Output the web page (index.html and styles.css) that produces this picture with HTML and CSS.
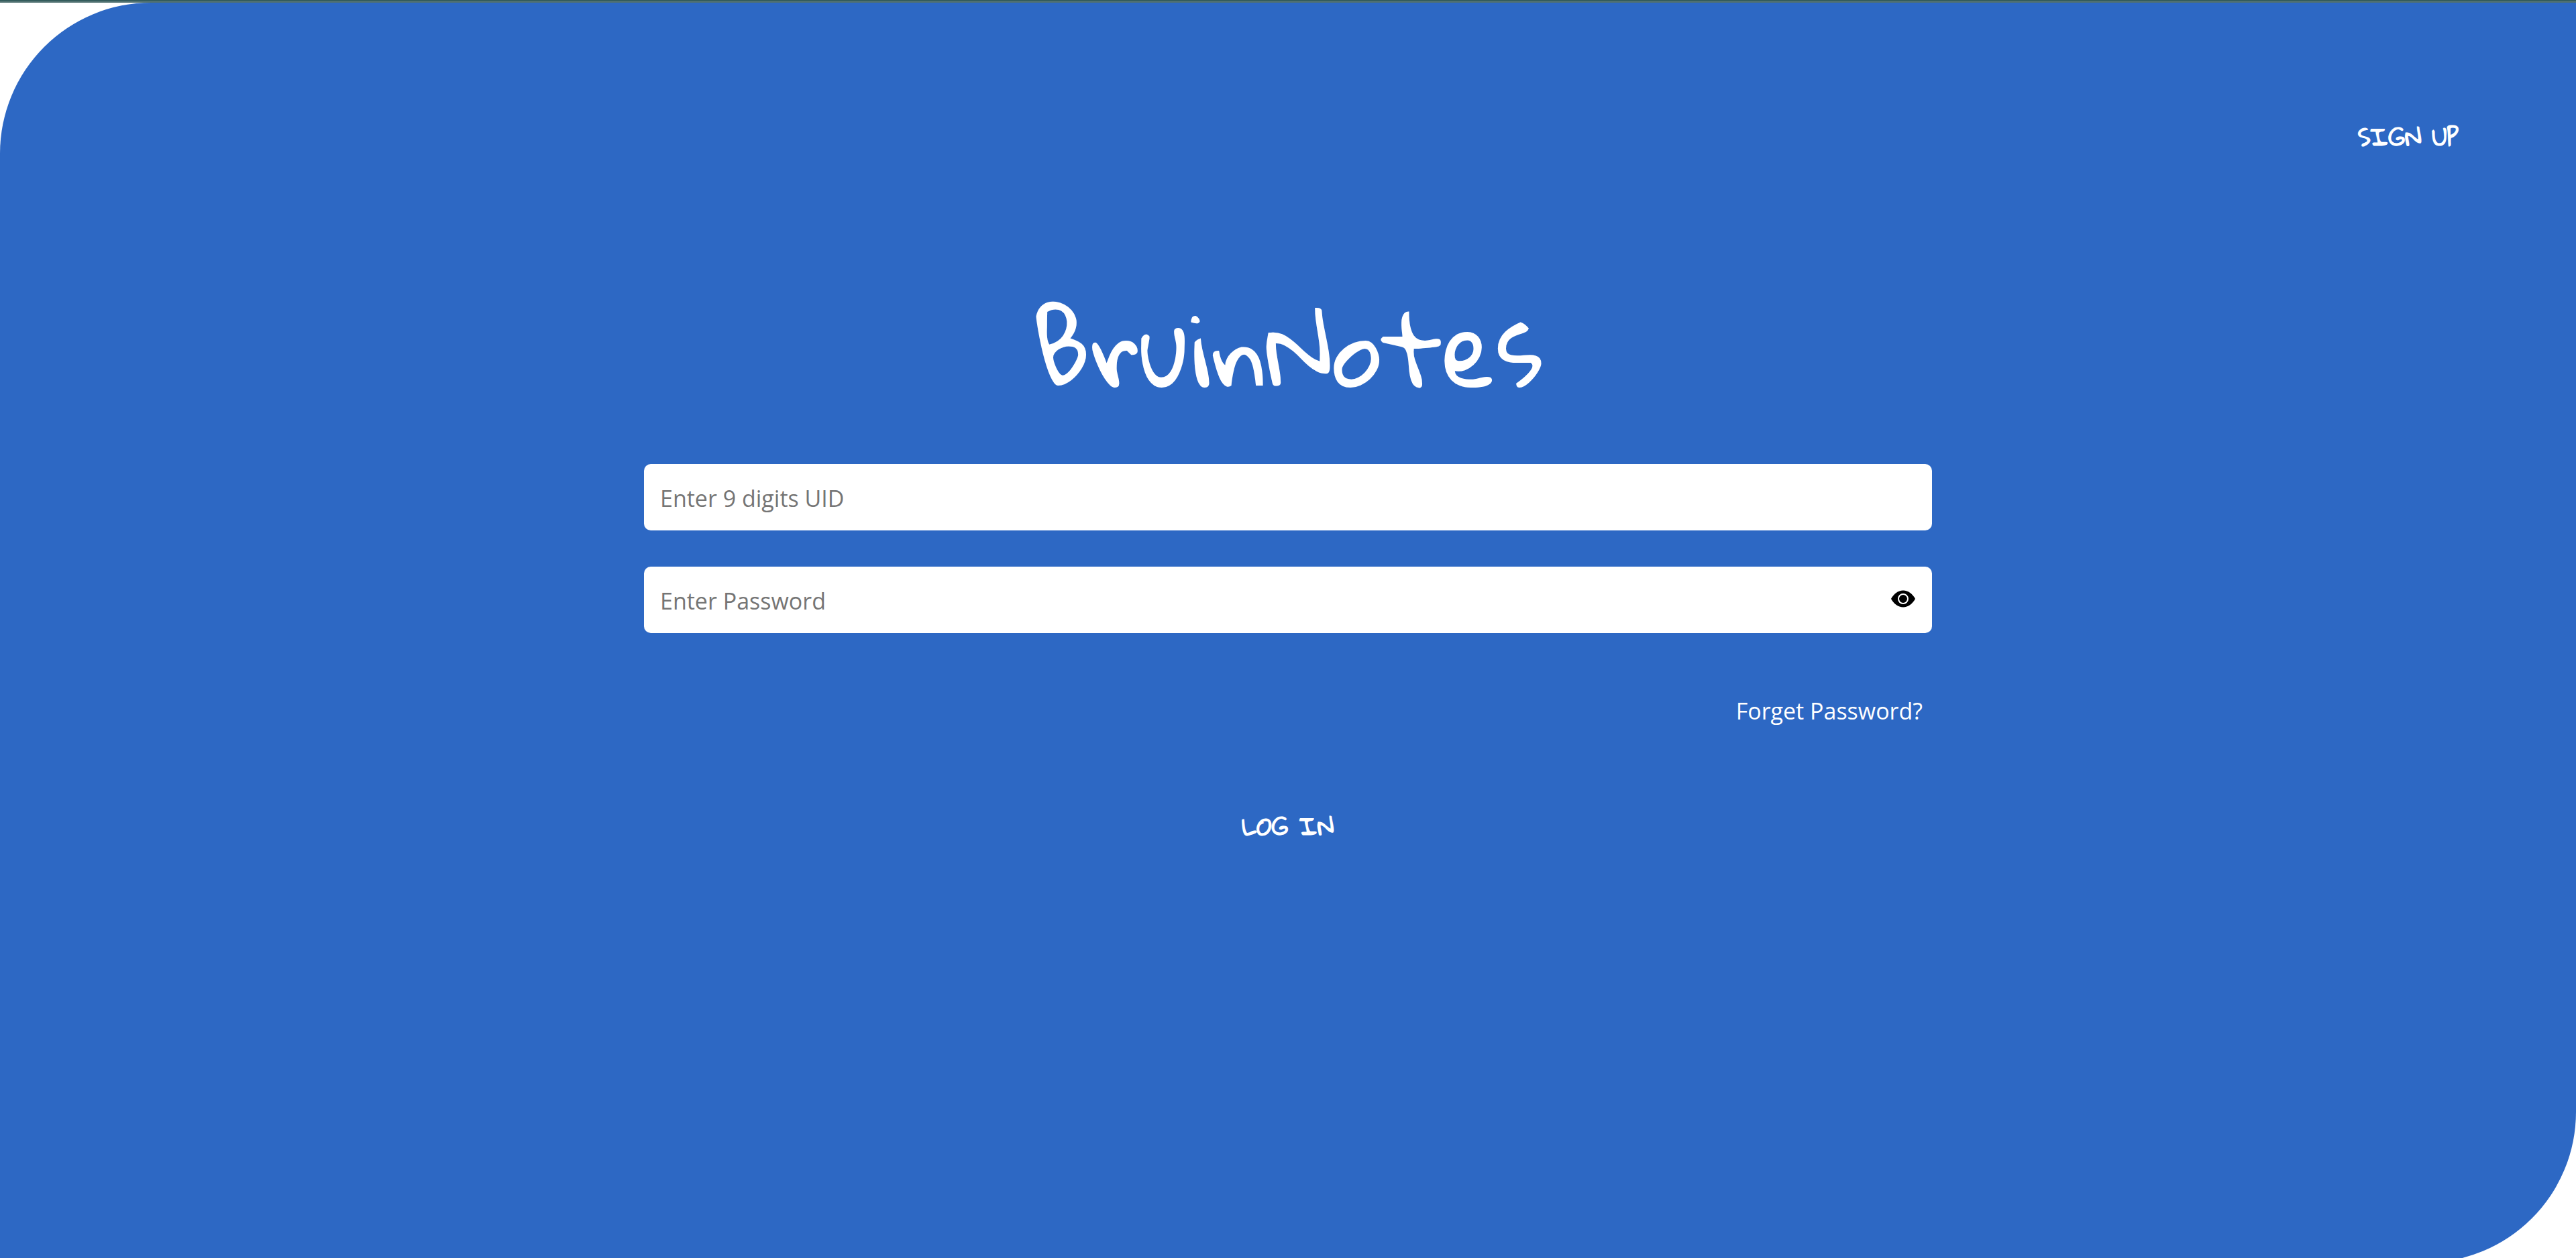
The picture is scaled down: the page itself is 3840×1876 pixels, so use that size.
FILE: index.html
```html
<!DOCTYPE html>
<html lang="en">
<head>
  <meta charset="utf-8">
  <meta name="viewport" content="width=device-width, initial-scale=1">
  <title>BruinNotes</title>
  <link rel="stylesheet" href="styles.css">
</head>
<body>
  <div class="page">
    <header class="header">
      <button class="action" type="button">SIGN UP</button>
    </header>
    <main class="login">
      <h1 class="title">BruinNotes</h1>
      <form class="form">
        <input class="field" type="text" name="uid" placeholder="Enter 9 digits UID" aria-label="UID">
        <div class="password">
          <input class="field" type="password" name="password" placeholder="Enter Password" aria-label="Password">
          <button class="reveal" type="button" aria-label="Show password">
            <svg class="eye" viewBox="0 0 36 26" aria-hidden="true">
              <path d="M0 13C4 5.500 10.500.5 18 .5S32 5.500 36 13c-4 7.500-10.500 12.500-18 12.500S4 20.500 0 13z" fill="#000"/>
              <circle cx="18" cy="13" r="7" fill="#000" stroke="#fff" stroke-width="2"/>
            </svg>
          </button>
        </div>
        <a class="forgot" href="#">Forget Password?</a>
        <button class="action submit" type="submit">LOG IN</button>
      </form>
    </main>
  </div>
</body>
</html>
```
FILE: styles.css
```css
* {
  box-sizing: border-box;
}

body {
  margin: 0;
  height: 100vh;
  overflow: hidden;
  background: #fff;
  font-family: "Segoe UI", "Open Sans", sans-serif;
}

/* thin two-tone line along the top edge */
body::before {
  content: "";
  display: block;
  height: 3px;
  border-top: 1px solid #2b5656;
  background: #4f7070;
}

.page {
  min-height: calc(100vh + 3px);
  padding-top: 159px;
  border-radius: 225px 0;
  background: #2d68c4;
}

.header {
  display: flex;
  justify-content: flex-end;
  padding-right: 175px;
}

.action {
  padding: 0;
  border: 0;
  background: none;
  color: #fff;
  font: 700 36px/80px "Gloria Hallelujah", Lato, cursive;
  cursor: pointer;
}

.login {
  width: 50%;
  margin: 0 auto;
}

.title {
  margin: 170px 0 69px;
  color: #fff;
  font: 400 146px/210px "Gloria Hallelujah", Lato, cursive;
  text-align: center;
}

.form {
  display: flex;
  flex-direction: column;
  gap: 54px;
}

.field {
  width: 100%;
  height: 99px;
  padding: 2px 24px 0;
  border: 0;
  border-radius: 10px;
  background: #fff;
  color: #000;
  font: 400 34px/48px "Segoe UI", "Open Sans", sans-serif;
}

.field::placeholder {
  color: #757575;
  opacity: 1;
}

.password {
  display: grid;
  align-items: center;
}

.password > * {
  grid-area: 1 / 1;
}

.reveal {
  display: flex;
  justify-self: end;
  margin-right: 25px;
  padding: 0 0 3px;
  border: 0;
  background: none;
  cursor: pointer;
}

.eye {
  width: 36px;
  height: 26px;
}

.forgot {
  align-self: flex-end;
  margin: 38px 14px 0 0;
  color: #fff;
  font-size: 34px;
  line-height: 48px;
  text-decoration: none;
}

.submit {
  align-self: center;
  margin-top: 53px;
}
```
